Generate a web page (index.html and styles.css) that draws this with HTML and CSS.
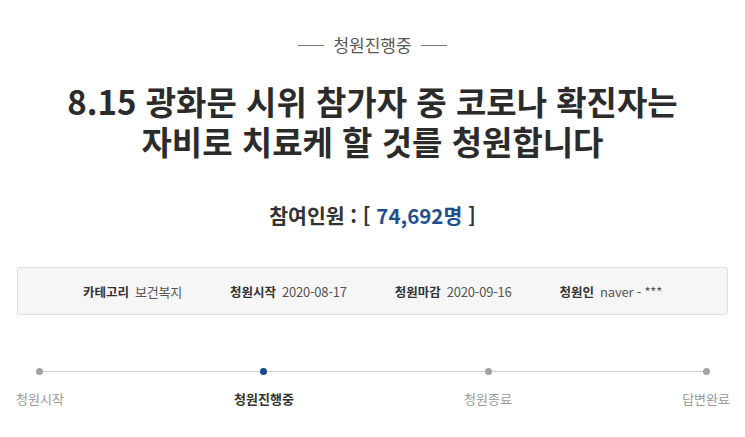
FILE: index.html
```html
<!DOCTYPE html>
<html lang="ko">
<head>
<meta charset="utf-8">
<link rel="stylesheet" href="styles.css">
</head>
<body>
<div class="page">
  <div class="status"><span class="rule"></span><span class="status-text">청원진행중</span><span class="rule"></span></div>
  <h1 class="title">8.15 광화문 시위 참가자 중 코로나 확진자는<br>자비로 치료케 할 것를 청원합니다</h1>
  <p class="count">참여인원 : [ <span class="num">74,692명</span> ]</p>
  <ul class="info">
    <li><b>카테고리</b><span>보건복지</span></li>
    <li><b>청원시작</b><span>2020-08-17</span></li>
    <li><b>청원마감</b><span>2020-09-16</span></li>
    <li><b>청원인</b><span>naver - ***</span></li>
  </ul>
  <ol class="steps">
    <li class="step"><i class="dot"></i><span>청원시작</span></li>
    <li class="step active"><i class="dot"></i><span>청원진행중</span></li>
    <li class="step"><i class="dot"></i><span>청원종료</span></li>
    <li class="step"><i class="dot"></i><span>답변완료</span></li>
  </ol>
</div>
</body>
</html>
```

FILE: styles.css
```css
* { box-sizing: border-box; }
html, body { margin: 0; padding: 0; background: #fff; }
body { font-family: "Noto Sans CJK KR", "Noto Sans", sans-serif; color: #333; }
.page { width: 745px; height: 437px; overflow: hidden; padding-top: 35px; }
.status { display: flex; justify-content: center; align-items: center; gap: 9px; height: 20px; color: #555; font-size: 17px; line-height: 20px; }
.rule { width: 26px; height: 1px; background: #777; }
.title { margin: 26px 0 0; text-align: center; font-size: 33px; line-height: 40px; font-weight: 700; color: #2b2b2b; letter-spacing: 0; }
.count { margin: 40px 0 0; text-align: center; font-size: 20.5px; line-height: 28px; font-weight: 700; color: #333; }
.count .num { color: #1f4f8f; }
.info { list-style: none; margin: 38px 17px 0; padding: 0; height: 48px; display: flex; justify-content: center; align-items: center; gap: 48px; background: #f6f6f6; border: 1px solid #dedede; border-radius: 3px; font-size: 12.5px; }
.info li { display: flex; align-items: center; gap: 6px; }
.info b { font-weight: 700; color: #333; }
.info span { color: #555; font-size: 13px; letter-spacing: -0.2px; }
.steps { list-style: none; margin: 53px 15px 0 16px; padding: 0; display: flex; justify-content: space-between; position: relative; }
.steps::before { content: ""; position: absolute; left: 24px; right: 24px; top: 3px; height: 1px; background: #cfcfcf; }
.step { display: flex; flex-direction: column; align-items: center; gap: 15px; font-size: 13px; line-height: 18px; color: #9a9a9a; position: relative; }
.dot { display: block; width: 7px; height: 7px; border-radius: 50%; background: #a3a3a3; }
.step.active { color: #333; font-weight: 700; }
.step.active .dot { background: #124a8c; }
```
